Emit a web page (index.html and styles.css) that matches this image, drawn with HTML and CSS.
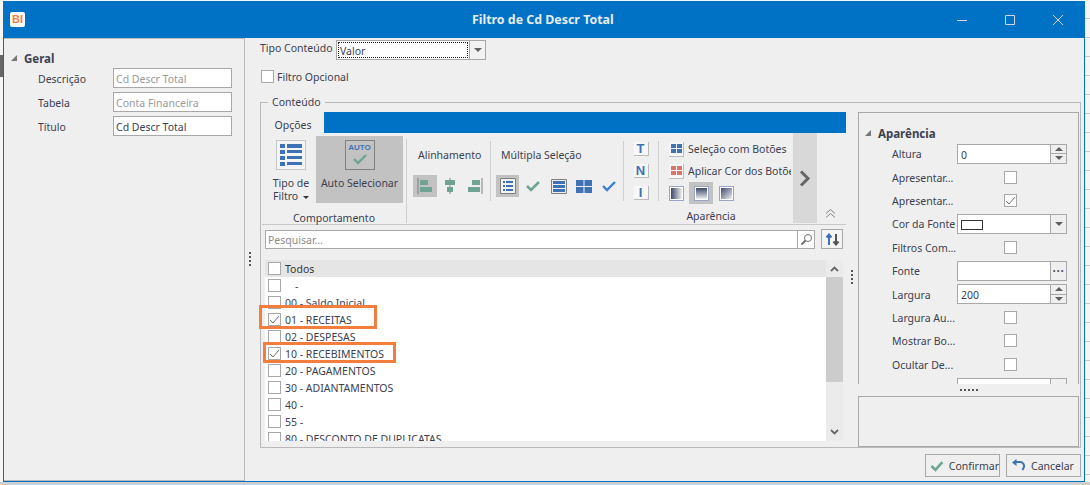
FILE: index.html
```html
<!DOCTYPE html>
<html lang="pt">
<head>
<meta charset="utf-8">
<title>Filtro de Cd Descr Total</title>
<link rel="stylesheet" href="styles.css">
</head>
<body>
<div class="backdrop"><i class="bg-dark"></i></div>
<div class="window">
  <header class="titlebar">
    <div class="app-logo">BI</div>
    <h1 class="title">Filtro de Cd Descr Total</h1>
    <div class="winctl">
      <svg width="12" height="12" viewBox="0 0 12 12"><path d="M1 6.5h10" stroke="#d4d8dc" fill="none"/></svg>
      <svg width="12" height="12" viewBox="0 0 12 12"><path d="M1.5 1.5h9v9h-9z" stroke="#d4d8dc" fill="none"/></svg>
      <svg width="12" height="12" viewBox="0 0 12 12"><path d="M1 1l10 10M11 1L1 11" stroke="#d4d8dc" fill="none"/></svg>
    </div>
  </header>
  <div class="body">
    <aside class="sidebar">
      <div class="pg-head"><span class="tri"></span>Geral</div>
      <div class="side-row"><label>Descrição</label><div class="field muted">Cd Descr Total</div></div>
      <div class="side-row"><label>Tabela</label><div class="field muted">Conta Financeira</div></div>
      <div class="side-row"><label>Título</label><div class="field">Cd Descr Total</div></div>
    </aside>
    <main class="main">
      <div class="type-row">
        <span>Tipo Conteúdo</span>
        <div class="combo"><div class="combo-val"><span>Valor</span></div><div class="combo-btn"><span class="down"></span></div></div>
      </div>
      <div class="opt-row"><span class="cb"></span><span class="txt">Filtro Opcional</span></div>
      <section class="fieldset">
        <div class="legend">Conteúdo</div>
        <div class="left">
          <div class="tabs"><div class="tab">Opções</div><div class="tabfill"></div></div>
          <div class="ribbon">
            <div class="group g-comp">
              <div class="g-items">
                <div class="big b-tipo">
                  <div class="bigicon"><svg width="26" height="26" viewBox="0 0 26 26" fill="#3f72b5"><path d="M2 2h5v4H2zM9 2h15v4H9zM2 8h5v4H2zM9 8h15v3H9zM2 14h5v4H2zM9 14h15v3H9zM2 20h5v4H2zM9 20h15v3H9z"/></svg></div>
                  <div class="biglabel">Tipo de<br>Filtro <span class="tiny-down"></span></div>
                </div>
                <div class="big b-auto">
                  <div class="autoicon"><b>AUTO</b><svg width="16" height="12" viewBox="0 0 16 12"><path d="M2 6l4 4 8-8" stroke="#6fa394" stroke-width="2.4" fill="none"/></svg></div>
                  <div class="biglabel">Auto Selecionar</div>
                </div>
              </div>
              <div class="g-title">Comportamento</div>
            </div>
            <div class="group g-opts">
              <div class="opts">
                <div class="o-col o-align">
                  <div class="o-title">Alinhamento</div>
                  <div class="o-icons">
                    <span class="ib on"><svg width="16" height="16" viewBox="0 0 16 16"><path d="M1 0v16" stroke="#808080"/><path d="M3 2h8v5H3zM3 9h12v5H3z" fill="#6fa394"/></svg></span>
                    <span class="ib"><svg width="16" height="16" viewBox="0 0 16 16"><path d="M8 0v16" stroke="#808080"/><path d="M3 2h10v5H3zM5 9h6v5H5z" fill="#6fa394"/></svg></span>
                    <span class="ib"><svg width="16" height="16" viewBox="0 0 16 16"><path d="M15 0v16" stroke="#808080"/><path d="M5 2h8v5H5zM1 9h12v5H1z" fill="#6fa394"/></svg></span>
                  </div>
                </div>
                <div class="o-col o-multi">
                  <div class="o-title">Múltipla Seleção</div>
                  <div class="o-icons">
                    <span class="ib on"><svg width="16" height="16" viewBox="0 0 16 16"><path d="M.5.5h15v15H.5z" fill="#f2f2f2" stroke="#808080"/><path d="M3 3h2v2H3zM6 3h7v2H6zM3 7h2v2H3zM6 7h7v2H6zM3 11h2v2H3zM6 11h7v2H6z" fill="#3f72b5"/></svg></span>
                    <span class="ib"><svg width="16" height="14" viewBox="0 0 16 14"><path d="M2 7l4 4 8-8" stroke="#6fa394" stroke-width="2.6" fill="none"/></svg></span>
                    <span class="ib"><svg width="16" height="15" viewBox="0 0 16 15"><path d="M.5.5h15v14H.5z" fill="none" stroke="#808080"/><path d="M2 2h12v3H2zM2 6h12v3H2zM2 10h12v3H2z" fill="#3f72b5"/></svg></span>
                    <span class="ib"><svg width="16" height="13" viewBox="0 0 16 13"><path d="M0 0h7.500v6H0zM8.500 0H16v6H8.500zM0 7h7.500v6H0zM8.500 7H16v6H8.500z" fill="#3f72b5"/></svg></span>
                    <span class="ib"><svg width="14" height="12" viewBox="0 0 14 12"><path d="M1 6l4 4 8-8" stroke="#3f7fc9" stroke-width="2.4" fill="none"/></svg></span>
                  </div>
                </div>
                <div class="o-col o-tni">
                  <span class="tni">T</span><span class="tni">N</span><span class="tni">I</span>
                </div>
                <div class="o-col o-btns">
                  <div class="o-line"><span class="sq"><svg width="11" height="9" viewBox="0 0 11 9"><path d="M0 0h5v4H0zM6 0h5v4H6zM0 5h5v4H0zM6 5h5v4H6z" fill="#3f72b5"/></svg></span>Seleção com Botões</div>
                  <div class="o-line"><span class="sq"><svg width="11" height="9" viewBox="0 0 11 9"><path d="M0 0h5v4H0zM6 0h5v4H6zM0 5h5v4H0zM6 5h5v4H6z" fill="#d9746c"/></svg></span><span class="clip">Aplicar Cor dos Botões</span></div>
                  <div class="grads">
                    <span class="ib2"><i class="gr gr-h"></i></span>
                    <span class="ib2 on"><i class="gr gr-v"></i></span>
                    <span class="ib2"><i class="gr gr-d"></i></span>
                  </div>
                </div>
              </div>
              <div class="g-title t-apar">Aparência</div>
            </div>
            <div class="scrollbtn"><svg width="12" height="17" viewBox="0 0 12 17"><path d="M2 1.500l7 7-7 7" stroke="#666" stroke-width="3" fill="none"/></svg></div>
            <div class="collapse"><svg width="11" height="9" viewBox="0 0 11 9"><path d="M1 4.500l4.500-4 4.500 4M1 8.500l4.500-4 4.500 4" stroke="#808080" fill="none"/></svg></div>
          </div>
          <div class="searchbar">
            <div class="search"><span class="ph txt">Pesquisar…</span><span class="sbtn"><svg width="13" height="13" viewBox="0 0 13 13"><circle cx="8" cy="5" r="3.500" stroke="#707070" fill="none"/><path d="M5.500 7.500L1.500 11.500" stroke="#707070" stroke-width="2"/></svg></span></div>
            <div class="sortbtn"><svg width="15" height="13" viewBox="0 0 15 13"><path d="M4 12V2M1.500 4.500L4 1.500l2.500 3" stroke="#3f72b5" stroke-width="2" fill="none"/><path d="M11 1v10M8.500 8.500l2.500 3 2.500-3" stroke="#555" stroke-width="2" fill="none"/></svg></div>
          </div>
          <div class="list">
            <div class="lrow lhead"><span class="cb"></span><span class="txt">Todos</span></div>
            <div class="lbody">
              <div class="lrows">
                <div class="lrow"><span class="cb"></span><span class="dash txt">-</span></div>
                <div class="lrow"><span class="cb"></span><span class="txt">00 - Saldo Inicial</span></div>
                <div class="lrow"><span class="cb chk"><svg width="11" height="11" viewBox="0 0 11 11"><path d="M1 6l3 3 6-7" stroke="#707070" fill="none"/></svg></span><span class="txt">01 - RECEITAS</span></div>
                <div class="lrow"><span class="cb"></span><span class="txt">02 - DESPESAS</span></div>
                <div class="lrow"><span class="cb chk"><svg width="11" height="11" viewBox="0 0 11 11"><path d="M1 6l3 3 6-7" stroke="#707070" fill="none"/></svg></span><span class="txt">10 - RECEBIMENTOS</span></div>
                <div class="lrow"><span class="cb"></span><span class="txt">20 - PAGAMENTOS</span></div>
                <div class="lrow"><span class="cb"></span><span class="txt">30 - ADIANTAMENTOS</span></div>
                <div class="lrow"><span class="cb"></span><span class="txt">40 -</span></div>
                <div class="lrow"><span class="cb"></span><span class="txt">55 -</span></div>
                <div class="lrow"><span class="cb"></span><span class="txt">80 - DESCONTO DE DUPLICATAS</span></div>
              </div>
            </div>
            <div class="vscroll">
              <svg width="9" height="6" viewBox="0 0 9 6"><path d="M1 5l3.500-3.500L8 5" stroke="#666" stroke-width="1.800" fill="none"/></svg>
              <div class="thumb"></div>
              <svg class="sc-down" width="9" height="6" viewBox="0 0 9 6"><path d="M1 1l3.500 3.500L8 1" stroke="#666" stroke-width="1.800" fill="none"/></svg>
            </div>
          </div>
          <div class="mark mark1"></div>
          <div class="mark mark2"></div>
        </div>
        <div class="grip gv"></div>
        <div class="right">
          <div class="props">
            <div class="pg-head ph2"><span class="tri"></span>Aparência</div>
            <div class="p-row"><label>Altura</label><div class="p-in"><span class="p-v">0</span><span class="spin"><i class="u"></i><i class="d"></i></span></div></div>
            <div class="p-row"><label>Apresentar...</label><span class="cb"></span></div>
            <div class="p-row"><label>Apresentar...</label><span class="cb chk"><svg width="11" height="11" viewBox="0 0 11 11"><path d="M1 6l3 3 6-7" stroke="#707070" fill="none"/></svg></span></div>
            <div class="p-row"><label>Cor da Fonte</label><div class="p-in"><span class="p-v"><i class="swatch"></i></span><span class="p-btn"><span class="down"></span></span></div></div>
            <div class="p-row"><label>Filtros Com...</label><span class="cb"></span></div>
            <div class="p-row"><label>Fonte</label><div class="p-in"><span class="p-v"></span><span class="p-btn dots">···</span></div></div>
            <div class="p-row"><label>Largura</label><div class="p-in"><span class="p-v">200</span><span class="spin"><i class="u"></i><i class="d"></i></span></div></div>
            <div class="p-row"><label>Largura Au...</label><span class="cb"></span></div>
            <div class="p-row"><label>Mostrar Bo...</label><span class="cb"></span></div>
            <div class="p-row"><label>Ocultar De...</label><span class="cb"></span></div>
            <div class="p-row"><label>Tamanho</label><div class="p-in"><span class="p-v">Médio</span><span class="p-btn"><span class="down"></span></span></div></div>
          </div>
          <div class="grip gh"></div>
          <div class="descbox"></div>
        </div>
      </section>
      <footer class="actions">
        <button class="btn"><svg width="14" height="12" viewBox="0 0 14 12"><path d="M1.500 6l4 4 7-8" stroke="#6fa394" stroke-width="2.600" fill="none"/></svg><span class="txt">Confirmar</span></button>
        <button class="btn"><svg width="15" height="13" viewBox="0 0 15 13"><path d="M4 3h5a4 4 0 0 1 3.500 6l-1 2" stroke="#3f72b5" stroke-width="2" fill="none"/><path d="M1 3.500L5.500 0v7z" fill="#3f72b5"/></svg><span class="txt">Cancelar</span></button>
      </footer>
    </main>
    <div class="grip gv gmain"></div>
  </div>
</div>
</body>
</html>
```
FILE: styles.css
```css
* { box-sizing: border-box; }
html, body { margin: 0; height: 485px; overflow: hidden; }
body {
  width: 1090px;
  position: relative;
  font: 10.5px/13px "Noto Sans", sans-serif;
  color: #3c4150;
  background: #f6f6f6;
}
.txt { padding-top: 2px; }
.backdrop {
  position: absolute;
  inset: 0;
  background:
    repeating-linear-gradient(to bottom, transparent 0 18px, #c9c9c9 18px 19px) right top / 5px 100% no-repeat,
    linear-gradient(#cfcfcf, #cfcfcf) left bottom / 100% 3px no-repeat,
    #f6f6f6;
}
.bg-dark { position: absolute; left: 0; top: 55px; width: 3px; height: 22px; background: #666; }
.window {
  position: absolute;
  left: 3px;
  top: 1px;
  width: 1082px;
  height: 481px;
  background: #efefef;
  border: solid #0072c6;
  border-width: 0 1px 1px;
  display: flex;
  flex-direction: column;
}
.titlebar {
  height: 37px;
  flex: none;
  margin: 0 -1px;
  background: #0072c6;
  display: flex;
  align-items: center;
  position: relative;
}
.app-logo {
  width: 15px;
  height: 15px;
  margin-left: 7px;
  background: #fff;
  border-radius: 2px;
  color: #f47c3c;
  font: bold 11px/15px "Liberation Sans", sans-serif;
  text-align: center;
}
.title {
  margin: 0;
  position: absolute;
  left: 469px;
  top: 11px;
  font: bold 12.4px/16px "Noto Sans", sans-serif;
  color: #e6edf5;
}
.winctl { margin-left: auto; margin-right: 21px; display: flex; gap: 36px; }
.winctl svg { display: block; }
.body { flex: 1; display: flex; min-height: 0; position: relative; }
.sidebar {
  width: 241px;
  flex: none;
  border: 1px solid #b9b9b9;
  border-width: 1px 1px 1px 0;
  padding-top: 11px;
}
.pg-head {
  display: flex;
  align-items: center;
  font-weight: 700;
  font-size: 11.5px;
  height: 16px;
  color: #3c4150;
  padding-left: 7px;
  gap: 7px;
}
.tri {
  width: 0;
  height: 0;
  border-style: solid;
  border-width: 0 0 6px 6px;
  border-color: transparent transparent #777 transparent;
}
.side-row {
  display: flex;
  align-items: center;
  height: 24px;
  padding-left: 34px;
}
.side-row label { width: 75px; padding-top: 2px; }
.field {
  width: 119px;
  height: 20px;
  background: #fff;
  border: 1px solid #a8a8a8;
  padding: 4px 2px 2px;
  line-height: 13px;
}
.field.muted { color: #999; }
.main {
  flex: 1;
  position: relative;
  min-width: 0;
  padding: 2px 3px 0 15px;
  display: flex;
  flex-direction: column;
}
.type-row { display: flex; align-items: center; height: 20px; margin-bottom: 9px; }
.type-row > span { width: 76px; padding-bottom: 4px; white-space: nowrap; }
.combo { display: flex; width: 150px; height: 20px; border: 1px solid #a8a8a8; background: #fff; }
.combo-val { flex: 1; padding: 1px; }
.combo-val span { display: block; height: 100%; border: 1px dotted #222; padding: 2px 1px 0; line-height: 12px; }
.combo-btn { width: 16px; border-left: 1px solid #a8a8a8; display: flex; align-items: center; justify-content: center; background: #f2f2f2; }
.down { width: 0; height: 0; border-style: solid; border-width: 4px 4px 0; border-color: #606060 transparent transparent; }
.tiny-down { display: inline-block; width: 0; height: 0; border-style: solid; border-width: 3px 3px 0; border-color: #333 transparent transparent; vertical-align: middle; margin-left: 2px; }
.cb {
  width: 13px;
  height: 13px;
  flex: none;
  background: #fff;
  border: 1px solid #a8a8a8;
  display: inline-flex;
  align-items: center;
  justify-content: center;
}
.opt-row { display: flex; align-items: center; height: 14px; gap: 3px; margin: 0 0 0 1px; }
.fieldset {
  margin-top: 19px;
  height: 346px;
  flex: none;
  border: 1px solid #b9b9b9;
  position: relative;
  display: flex;
  padding: 9px 1px 0 1px;
}
.legend {
  position: absolute;
  left: 7px;
  top: -7px;
  background: #efefef;
  padding: 0 4px;
  line-height: 13px;
}
.left { width: 584px; flex: none; position: static; }
.tabs { display: flex; height: 21px; }
.tab { width: 62px; text-align: center; line-height: 26px; color: #3c4150; }
.tabfill { flex: 1; background: #0072c6; }
.ribbon {
  height: 92px;
  position: relative;
  display: flex;
  border-bottom: 1px solid #c8c8c8;
}
.group { display: flex; flex-direction: column; }
.g-comp { width: 145px; border-right: 1px solid #cfcfcf; height: 84px; margin-top: 6px; }
.g-items { display: flex; height: 68px; margin-top: -3px; padding-left: 6px; gap: 10px; }
.g-title { text-align: center; line-height: 14px; margin-top: 8px; color: #3c4150; }
.big { text-align: center; }
.b-tipo { width: 30px; margin-left: 8px; padding-top: 4px; flex: none; }
.b-tipo .biglabel { margin-left: -6px; margin-right: -6px; }
.bigicon { width: 30px; height: 30px; background: #f4f4f4; border: 1px solid #c6c6c6; display: flex; align-items: center; justify-content: center; }
.biglabel { margin-top: 7px; white-space: nowrap; line-height: 13px; }
.b-auto { width: 87px; background: #c2c2c2; padding-top: 4px; flex: none; }
.autoicon {
  width: 30px;
  height: 30px;
  margin: 0 auto;
  border: 1px solid #808080;
  display: flex;
  flex-direction: column;
  align-items: center;
  gap: 0;
}
.autoicon b { font: bold 8px/10px "Liberation Sans", sans-serif; color: #3f72b5; margin-top: 2px; }
.g-opts { width: 385px; }
.opts { display: flex; height: 68px; margin-top: 8px; }
.o-col { border-right: 1px solid #cfcfcf; height: 60px; flex: none; }
.o-align { width: 84px; padding-left: 6px; }
.o-multi { width: 133px; padding-left: 5px; }
.o-title { padding: 8px 0 0 5px; line-height: 13px; height: 34px; }
.o-icons { display: flex; align-items: center; }
.ib { width: 24px; height: 22px; display: flex; align-items: center; justify-content: center; margin-right: 1px; }
.ib.on { background: #c2c2c2; }
.o-multi .ib { margin-right: 2px; }
.o-tni { width: 35px; display: flex; flex-direction: column; align-items: center; gap: 8px; padding-top: 1px; }
.tni {
  width: 15px;
  height: 14px;
  background: #f7f7f7;
  border-right: 1px solid #bbb;
  border-bottom: 1px solid #bbb;
  color: #3f72b5;
  font: bold 13px/14px "Liberation Sans", sans-serif;
  text-align: center;
}
.o-btns { border: 0; width: 133px; padding-left: 10px; margin-top: -3px; }
.o-line { display: flex; align-items: center; height: 22px; gap: 4px; white-space: nowrap; }
.clip { width: 103px; overflow: hidden; }
.sq { width: 15px; height: 15px; background: #f7f7f7; border-right: 1px solid #bbb; border-bottom: 1px solid #bbb; display: flex; align-items: center; justify-content: center; flex: none; }
.grads { display: flex; height: 22px; align-items: center; margin-left: -5px; }
.ib2 { width: 24px; height: 22px; display: flex; align-items: center; justify-content: center; margin-right: 1px; }
.ib2.on { background: #c2c2c2; }
.gr { display: block; width: 15px; height: 15px; border: 1px solid #9aa3c8; box-shadow: inset 0 0 0 1px #fff; }
.gr-h { background: linear-gradient(to right, #30395c, #fff); }
.gr-v { background: linear-gradient(to bottom, #30395c, #fff); }
.gr-d { background: linear-gradient(135deg, #30395c, #fff); }
.t-apar { margin-top: 0; padding-left: 218px; margin-left: 5px; }
.scrollbtn { position: absolute; left: 531px; top: 0; width: 24px; height: 90px; background: #d8d8d8; display: flex; align-items: center; justify-content: center; }
.collapse { position: absolute; left: 563px; top: 76px; }
.collapse svg { display: block; }
.searchbar { display: flex; padding: 4px 3px 0 3px; height: 28px; gap: 6px; }
.search { width: 550px; height: 19px; margin-top: 1px; background: #fff; border: 1px solid #a8a8a8; display: flex; justify-content: space-between; align-items: center; padding-left: 2px; color: #8c8c8c; }
.sbtn { width: 17px; height: 17px; border-left: 1px solid #a8a8a8; display: flex; align-items: center; justify-content: center; }
.sortbtn { width: 22px; height: 20px; background: #f4f4f4; border: 1px solid #a8a8a8; display: flex; align-items: center; justify-content: center; }
.list { margin: 7px 0 0 3px; width: 578px; height: 181px; position: relative; overflow: hidden; background: #fff; }
.lrow { height: 17px; display: flex; align-items: center; gap: 4px; padding-left: 3px; white-space: nowrap; }
.lhead { background: #e5e5e5; color: #333; font-weight: 400; height: 17px; }
.lbody { height: 164px; overflow: hidden; }
.dash { padding-left: 10px; }
.vscroll { position: absolute; right: 0; top: 0; bottom: 0; width: 17px; display: flex; flex-direction: column; align-items: center; background: #ebebeb; }
.vscroll svg { margin-top: 6px; flex: none; }
.thumb { width: 17px; height: 105px; margin-top: 5px; background: #cccccc; flex: none; }
.vscroll .sc-down { margin-top: 47px; }
.mark { position: absolute; border: 3px solid #f47c3c; pointer-events: none; }
.mark1 { left: -2px; top: 202px; width: 118px; height: 24px; }
.mark2 { left: 2px; top: 239px; width: 133px; height: 21px; }
.grip { position: absolute; }
.gv { width: 2px; height: 14px; background: repeating-linear-gradient(to bottom, #555 0 2px, transparent 2px 4px); }
.fieldset > .gv { left: 590px; top: 167px; }
.gmain { left: 245px; top: 214px; }
.right { margin-left: 12px; width: 221px; flex: none; display: flex; flex-direction: column; }
.props { height: 272px; border: 1px solid #a8a8a8; border-bottom: 0; overflow: hidden; padding-top: 12px; }
.ph2 { padding-left: 6px; margin-bottom: 1px; }
.p-row { display: flex; align-items: center; height: 23.4px; padding-left: 33px; position: relative; white-space: nowrap; }
.p-row label { width: 65px; flex: none; padding-top: 2px; }
.p-row > .cb { margin-left: 47px; }
.p-in { width: 110px; height: 20px; background: #fff; border: 1px solid #a8a8a8; display: flex; flex: none; }
.p-v { flex: 1; padding: 3px 3px 1px; line-height: 14px; display: flex; align-items: center; }
.spin { width: 16px; border-left: 1px solid #a8a8a8; display: flex; flex-direction: column; background: #efefef; }
.spin i { flex: 1; display: flex; align-items: center; justify-content: center; }
.spin i + i { border-top: 1px solid #a8a8a8; }
.spin .u::before { content: ""; border-style: solid; border-width: 0 4px 4px; border-color: transparent transparent #606060; }
.spin .d::before { content: ""; border-style: solid; border-width: 4px 4px 0; border-color: #606060 transparent transparent; }
.p-btn { width: 16px; border-left: 1px solid #a8a8a8; display: flex; align-items: center; justify-content: center; background: #efefef; }
.dots { font: bold 12px/14px "Liberation Sans", sans-serif; color: #555; }
.swatch { display: block; width: 22px; height: 10px; border: 1px solid #333; background: #fff; }
.gh { position: static; width: 18px; height: 2px; margin: 5px auto 5px; background: repeating-linear-gradient(to right, #555 0 2px, transparent 2px 4px); }
.descbox { height: 51px; border: 1px solid #a8a8a8; }
.actions { display: flex; justify-content: flex-end; gap: 6px; margin: 6px 0 0; }
.btn {
  width: 75px;
  height: 23px;
  display: flex;
  align-items: center;
  justify-content: flex-start;
  gap: 5px;
  padding: 0 0 0 4px;
  background: #efefef;
  border: 1px solid #a8a8a8;
  font: 10.5px/13px "Noto Sans", sans-serif;
  color: #3c4150;
}
```
